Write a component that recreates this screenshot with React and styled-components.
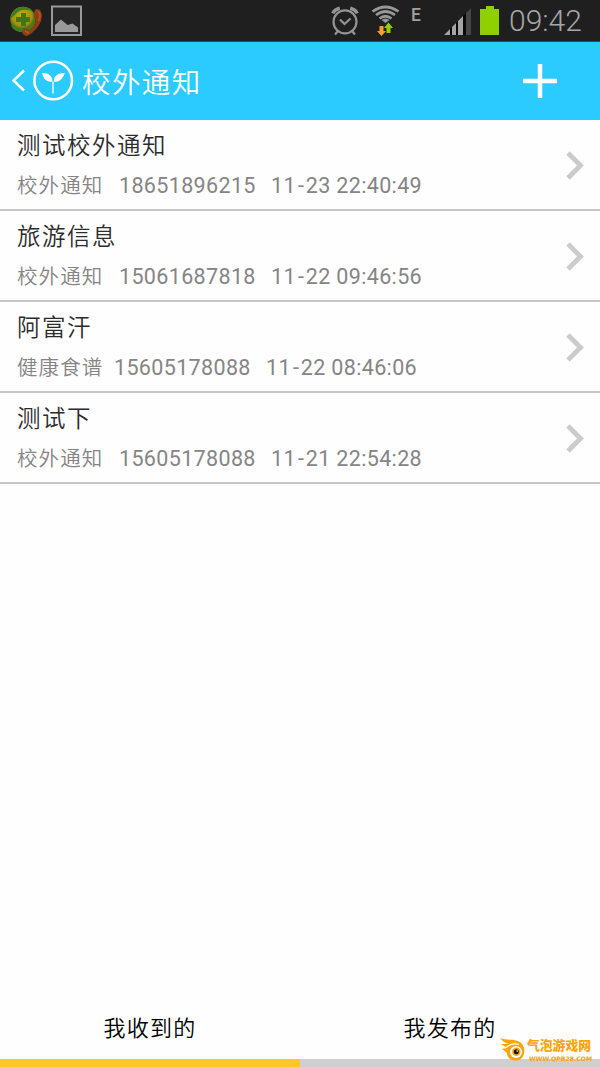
import React from 'react';
import styled, { createGlobalStyle } from 'styled-components';

const GlobalStyle = createGlobalStyle`
  * { box-sizing: border-box; }
  body { margin: 0; background: #fefefe; font-family: Roboto, "Noto Sans CJK SC", sans-serif; }
`;

const Screen = styled.div`
  display: flex;
  flex-direction: column;
  width: 600px;
  height: 1067px;
  background: #fefefe;
  overflow: hidden;
`;

const StatusBar = styled.div`
  display: flex;
  flex: none;
  justify-content: space-between;
  height: 42px;
  background: #1f1f1f;
  border-bottom: 1px solid #24505f;
`;

const StatusIcons = styled.svg`
  display: block;
  flex: none;
`;

const StatusRight = styled.div`
  display: flex;
`;

const Clock = styled.time`
  width: 92px;
  padding-left: 1px;
  font-size: 30px;
  line-height: 41px;
  font-weight: 300;
  color: #a6a6a6;
  white-space: nowrap;
`;

const NetworkType = styled.span`
  width: 20px;
  padding-left: 1px;
  font-size: 17.5px;
  line-height: 30px;
  font-weight: 500;
  color: #a0a0a0;
`;

const Header = styled.header`
  display: flex;
  flex: none;
  align-items: center;
  height: 78px;
  padding: 0 43px 0 11px;
  background: #2bcaff;
`;

const HeaderTitle = styled.h1`
  flex: 1;
  margin: 5px 0 0 7px;
  font-size: 28.5px;
  line-height: 40px;
  font-weight: 350;
  letter-spacing: 1.4px;
  color: #fff;
`;

const List = styled.ul`
  flex: 1;
  margin: 0;
  padding: 0;
  list-style: none;
`;

const Row = styled.li`
  display: flex;
  align-items: center;
  justify-content: space-between;
  height: 91px;
  padding: 0 15px 0 17px;
  border-bottom: 2px solid #c6c6c6;
`;

const RowBody = styled.div`
  display: flex;
  flex-direction: column;
  gap: 6px;
`;

const RowTitle = styled.div`
  font-size: 23.5px;
  line-height: 36px;
  font-weight: 350;
  letter-spacing: 1.5px;
  color: #2c2c2c;
`;

const RowMeta = styled.div`
  display: flex;
  font-size: 21.5px;
  line-height: 32px;
  color: #858585;
`;

const Category = styled.span`
  width: ${(p) => (p.$tight ? 97 : 102)}px;
  font-size: 20.5px;
  font-weight: 350;
  letter-spacing: 1.1px;
`;

const Phone = styled.span`
  width: 152px;
  letter-spacing: 0.35px;
`;

const Stamp = styled.span`
  letter-spacing: 0.35px;
`;

const Dash = styled.span`
  margin: 0 1.6px 0 2px;
`;

const Tabs = styled.nav`
  display: flex;
  flex: none;
  height: 76px;
`;

const Tab = styled.div`
  flex: 1;
  padding-top: 20px;
  border-bottom: 8px solid ${(p) => (p.$active ? '#ffc62c' : '#cfcfcf')};
  text-align: center;
  font-size: 22px;
  line-height: 36px;
  font-weight: 350;
  letter-spacing: 1.2px;
  color: #000;
`;

const Watermark = styled.div`
  position: absolute;
  left: 499px;
  top: 1036px;
  display: flex;
  color: #f9a50b;
`;

const MarkText = styled.div`
  display: flex;
  flex-direction: column;
  margin-left: 1px;
`;

const MarkName = styled.span`
  font-size: 12.8px;
  line-height: 19px;
  font-weight: 900;
  white-space: nowrap;
`;

const MarkUrl = styled.span`
  padding-left: 2px;
  font: bold 6.2px/7px "DejaVu Sans", sans-serif;
  letter-spacing: -0.05px;
  white-space: nowrap;
`;

const messages = [
  { title: '测试校外通知', category: '校外通知', phone: '18651896215', time: '11-23 22:40:49' },
  { title: '旅游信息', category: '校外通知', phone: '15061687818', time: '11-22 09:46:56' },
  { title: '阿富汗', category: '健康食谱', phone: '15605178088', time: '11-22 08:46:06', tight: true },
  { title: '测试下', category: '校外通知', phone: '15605178088', time: '11-21 22:54:28' },
];

function NoticeIcons() {
  return (
    <StatusIcons width="90" height="41" viewBox="0 0 90 41">
      <defs>
        <radialGradient id="ball" cx="45%" cy="35%">
          <stop offset="0" stopColor="#c5ad0b" />
          <stop offset="0.8" stopColor="#a09209" />
          <stop offset="1" stopColor="#4d761c" />
        </radialGradient>
      </defs>
      <circle cx="23" cy="19.500" r="12.700" fill="url(#ball)" />
      <path d="M11 16C13 8 21 5 29 8.500L33 12C27 9 22 9 18 12C15 14 14 17 10.500 18ZM11 25l5 2 6 5C16 32 12 29 11 25Z" fill="#407b20" />
      <path d="M21 13h5v4h4v5h-4v4h-5v-4h-5v-5h5Z" fill="#397a18" />
      <path d="M36 9c6 0 7 6 5 12-3 7-8 12-14 15-4 0-6-4-4-7 2-1.500 5 0 7 1 3-3 5-6 6-10-3-3-3-8 0-11Z" fill="#8e3e16" />
      <path d="M37.500 11c3 2 3 6 1 10M25 31l4 2" fill="none" stroke="#b65727" strokeWidth="1.500" />
      <rect x="52" y="6.500" width="29" height="28.500" fill="#252525" stroke="#999" strokeWidth="2" />
      <path d="M55 32v-7l6-5.500 6.500 5.500 5-1.500 5.500 4v4.500Z" fill="#999" />
    </StatusIcons>
  );
}

function AlarmWifiIcons() {
  return (
    <StatusIcons width="79" height="41" viewBox="0 0 79 41">
      <g fill="none" stroke="#949494" strokeWidth="2.200">
        <circle cx="14" cy="21.800" r="11.500" />
        <path d="M9 19.500l4.500 4.500 6-5.500" />
        <path d="M7 31l-3 3.500M21 31l3 3.500" />
        <path d="M1.800 13.400Q3.500 9.500 8.800 8.300M26.200 13.400Q24.500 9.500 19.200 8.300" strokeWidth="3.500" />
      </g>
      <g fill="none" stroke="#989898" strokeWidth="2.700">
        <path d="M41.500 11.500Q54.500 2.500 67.500 11.500" />
        <path d="M45 15Q54.500 8 64 15" />
        <path d="M48.500 18.500Q54.500 14 60.500 18.500" />
      </g>
      <path d="M50.500 20Q54.500 17 58.500 20L54.500 23Z" fill="#989898" />
      <path d="M48.500 26h4v5h2.500l-4.500 5-4.500-5h2.500Z" fill="#ff9d2d" />
      <path d="M55.500 33v-5H53l4.500-5.500 4.500 5.500h-2.500v5Z" fill="#91d000" />
    </StatusIcons>
  );
}

function SignalIcons() {
  return (
    <StatusIcons width="78" height="41" viewBox="0 0 78 41">
      <path d="M14 35L41 8V35Z" fill="#080808" />
      <path d="M14 35L20 29V35ZM22 27L26 23V35H22ZM28 21L33 16V35H28Z" fill="#a4a4a4" />
      <path d="M36 13L41 8V35H36Z" fill="#464646" />
      <path d="M50 9h6V6h8v3h5v26H50Z" fill="#91d000" />
    </StatusIcons>
  );
}

function BackLogo() {
  return (
    <svg width="64" height="48" viewBox="0 0 64 48" fill="none" stroke="#fff">
      <path d="M13 13.500L2.500 23.500l10.500 10" strokeWidth="2.500" />
      <circle cx="42.200" cy="23.500" r="18.800" strokeWidth="2.500" />
      <path d="M42 36.500V24.500" strokeWidth="2" stroke="#b6edff" />
      <path d="M41.500 24.500c-5 1-9-2-10.500-8.500 6-.5 10.500 2.500 10.500 8.500ZM42.700 24.500c5 1 9-2 11-8.500-6-.5-11 2.500-11 8.500Z" fill="#fff" stroke="none" />
    </svg>
  );
}

function Chevron() {
  return (
    <svg width="20" height="30" viewBox="0 0 20 30" fill="none" stroke="#cbcbcb" strokeWidth="4.800">
      <path d="M3 3L15.500 15.500 3 28" />
    </svg>
  );
}

function Timestamp({ value }) {
  const [month, rest] = value.split('-');
  return (
    <Stamp>
      {month}
      <Dash>-</Dash>
      {rest}
    </Stamp>
  );
}

export default function App() {
  return (
    <Screen>
      <GlobalStyle />
      <StatusBar>
        <NoticeIcons />
        <StatusRight>
          <AlarmWifiIcons />
          <NetworkType>E</NetworkType>
          <SignalIcons />
          <Clock>09:42</Clock>
        </StatusRight>
      </StatusBar>
      <Header>
        <BackLogo />
        <HeaderTitle>校外通知</HeaderTitle>
        <svg width="34" height="34" viewBox="0 0 34 34">
          <path d="M17 0v34M0 17h34" stroke="#fff" strokeWidth="4.500" />
        </svg>
      </Header>
      <List>
        {messages.map((m) => (
          <Row key={m.title}>
            <RowBody>
              <RowTitle>{m.title}</RowTitle>
              <RowMeta>
                <Category $tight={m.tight}>{m.category}</Category>
                <Phone>{m.phone}</Phone>
                <Timestamp value={m.time} />
              </RowMeta>
            </RowBody>
            <Chevron />
          </Row>
        ))}
      </List>
      <Tabs>
        <Tab $active>我收到的</Tab>
        <Tab>我发布的</Tab>
      </Tabs>
      <Watermark>
        <svg width="27" height="27" viewBox="0 0 27 27">
          <path d="M1 2c7 3 17 0 22 6 4 5 3 13-3 16-7 2-12-2-12-7L3 13l5-1-6-4 8 0C6 7 3 5 1 2Z" fill="#f9a50b" />
          <path d="M7 11.500q6-5 13-3" fill="none" stroke="#fff" strokeWidth="1.300" />
          <circle cx="17" cy="16" r="6" fill="#fff" />
          <circle cx="17.300" cy="15.800" r="4.200" fill="#f9a50b" />
          <circle cx="17.300" cy="15.800" r="2.500" fill="#171717" />
          <circle cx="18.200" cy="15" r="0.800" fill="#fff" />
        </svg>
        <MarkText>
          <MarkName>气泡游戏网</MarkName>
          <MarkUrl>WWW.QPB28.COM</MarkUrl>
        </MarkText>
      </Watermark>
    </Screen>
  );
}
